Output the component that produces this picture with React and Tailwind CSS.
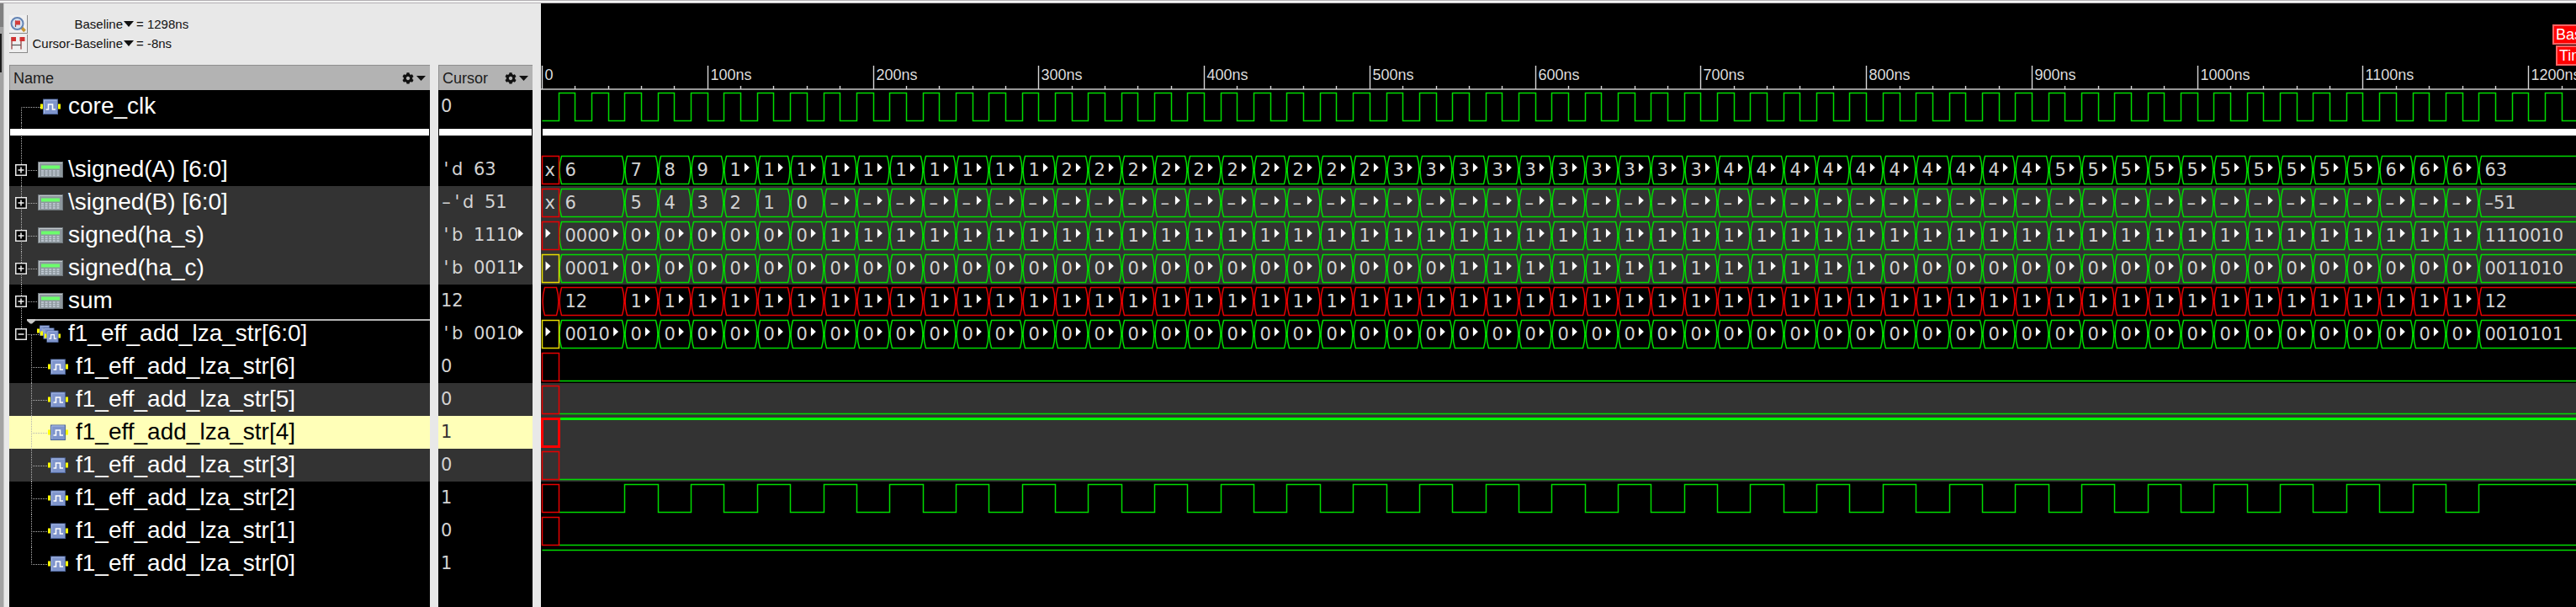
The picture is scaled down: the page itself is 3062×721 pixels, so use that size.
import React from "react";
import { FaCog } from "react-icons/fa";

const PX_PER_NS = 1.9677;
const END = 1700;
const LAST_LABEL = 1200;
const HIGH = 3.6;
const LOW = 36.6;
const GREEN = "#00dc00";
const RED = "#e60000";
const YELLOW = "#e6dc00";

const timeToX = (t) => Math.floor(1.5 + t * PX_PER_NS) + 0.5;

const bits = (n) => (n & 127).toString(2).padStart(7, "0");

// A counts up from 6 while B counts down, so that A + B stays at 12.
const samples = [
  { from: 10, to: 50, a: 6 },
  ...Array.from({ length: 56 }, (_, i) => ({
    from: 50 + i * 20,
    to: 70 + i * 20,
    a: 7 + i,
  })),
  { from: 1170, to: END, a: 63 },
];

const signals = [
  {
    kind: "bus", name: "\\signed(A) [6:0]", prefix: "'d ", cursor: "63",
    unknown: "x", unknownColor: RED, color: GREEN,
    value: ({ a }) => String(a),
  },
  {
    kind: "bus", name: "\\signed(B) [6:0]", prefix: "–'d ", cursor: "51", shaded: true,
    unknown: "x", unknownColor: RED, color: GREEN,
    value: ({ a }) => (a > 12 ? "–" + (a - 12) : String(a === 6 ? 6 : 12 - a)),
  },
  {
    kind: "bus", name: "signed(ha_s)", prefix: "'b ", cursor: "1110", cut: true, shaded: true,
    unknown: ">", unknownColor: RED, color: GREEN,
    value: ({ a }) => bits(a ^ (12 - a)),
  },
  {
    kind: "bus", name: "signed(ha_c)", prefix: "'b ", cursor: "0011", cut: true, shaded: true,
    unknown: ">", unknownColor: YELLOW, color: GREEN,
    value: ({ a }) => bits((a & (12 - a)) << 1),
  },
  {
    kind: "bus", name: "sum", prefix: "", cursor: "12",
    unknown: "", unknownColor: RED, color: RED,
    value: () => "12",
  },
  {
    kind: "group", name: "f1_eff_add_lza_str[6:0]", prefix: "'b ", cursor: "0010", cut: true,
    unknown: ">", unknownColor: YELLOW, color: GREEN,
    value: ({ from }) => (((from - 50) / 20) % 2 === 0 ? "0010101" : "0010001"),
  },
  { kind: "bit", name: "f1_eff_add_lza_str[6]", cursor: "0", level: 0, unknown: true },
  { kind: "bit", name: "f1_eff_add_lza_str[5]", cursor: "0", level: 0, unknown: true, shaded: true },
  { kind: "bit", name: "f1_eff_add_lza_str[4]", cursor: "1", level: 1, unknown: true, shaded: true, selected: true },
  { kind: "bit", name: "f1_eff_add_lza_str[3]", cursor: "0", level: 0, unknown: true, shaded: true },
  { kind: "bit", name: "f1_eff_add_lza_str[2]", cursor: "1", toggles: true, level: 0, unknown: true },
  { kind: "bit", name: "f1_eff_add_lza_str[1]", cursor: "0", level: 0, unknown: true },
  { kind: "bit", name: "f1_eff_add_lza_str[0]", cursor: "1", level: 1, last: true },
];

/* ---------- icons ---------- */

function PulseBox({ x, y, size }) {
  const s = size / 18;
  return (
    <g transform={`translate(${x} ${y}) scale(${s})`}>
      <rect x="0.5" y="0.5" width="17" height="17.5" fill="#7f95cc" stroke="#4c6499" />
      <path d="M1.5 17V1.5H16.5" fill="none" stroke="#a9bbe6" />
      <path d="M3.5 12.5H6.5V6.5H11.5V12.5H15" fill="none" stroke="#fff" strokeWidth="1.6" />
    </g>
  );
}

function SignalGlyph({ x }) {
  return (
    <g>
      <rect x={x} y="16.5" width="3.5" height="6" fill="#ffff00" />
      <rect x={x + 20.5} y="16.5" width="3.5" height="6" fill="#ffff00" />
      <PulseBox x={x + 3} y={10.5} size={18} />
    </g>
  );
}

function RegisterGlyph({ x }) {
  return (
    <g>
      <rect x={x + 0.5} y="10.5" width="29" height="18" fill="#8d979d" stroke="#6f777c" />
      <path d={`M${x + 1.5} 28V11.5H${x + 29}`} fill="none" stroke="#c3c9cc" />
      <rect x={x + 4} y="14.5" width="22" height="4" fill="#6cff6c" />
      {[21, 23.5, 26].map((y) => (
        <path key={y} d={`M${x + 4} ${y}H${x + 26}`} stroke="#c6d0da" strokeWidth="1.4" strokeDasharray="3 1.6" />
      ))}
    </g>
  );
}

function GroupGlyph() {
  return (
    <g>
      <rect x="33" y="13.5" width="3" height="5" fill="#ffff00" />
      <PulseBox x={36} y={9.5} size={12} />
      <rect x="37" y="16.5" width="3" height="5" fill="#ffff00" />
      <PulseBox x={40.5} y={12.5} size={13} />
      <rect x="42" y="19.5" width="3" height="5" fill="#ffff00" />
      <rect x="58" y="19.5" width="3" height="5" fill="#ffff00" />
      <PulseBox x={44.5} y={15.5} size={14} />
    </g>
  );
}

function Guides({ d }) {
  return <path d={d} fill="none" stroke="#b4b4b4" strokeDasharray="1 1" />;
}

function Expander({ open, name }) {
  return (
    <button
      type="button"
      aria-label={(open ? "Collapse " : "Expand ") + name}
      className="absolute left-[7px] top-[13px] block size-[14px] bg-black"
    >
      <svg viewBox="0 0 14 14" className="block size-full">
        <rect x="0.75" y="0.75" width="12.5" height="12.5" fill="none" stroke="#e6e6e6" strokeWidth="1.5" />
        <path d={open ? "M3.5 7H10.5" : "M3.5 7H10.5M7 3.5V10.5"} stroke="#f0f0f0" strokeWidth="1.5" />
      </svg>
    </button>
  );
}

function ColumnMenu({ label }) {
  return (
    <button type="button" aria-label={label} className="flex items-center gap-[3px] text-[#111]">
      <FaCog className="size-[14px]" />
      <svg viewBox="0 0 11 6" className="h-[6px] w-[11px]">
        <path d="M0 0H11L5.5 6Z" fill="currentColor" />
      </svg>
    </button>
  );
}

/* ---------- left side ---------- */

function NameCell({ signal }) {
  const { kind, name, last } = signal;
  const child = kind === "bit";
  return (
    <td className="relative p-0">
      <div className="flex h-[39px] items-center">
        <svg
          className={child ? "block h-[39px] w-[79px] shrink-0" : "block h-[39px] w-[70px] shrink-0"}
          aria-hidden="true"
        >
          {kind === "clock" && <Guides d="M14.5 39V20.5H38" />}
          {kind === "bus" && <Guides d="M14.5 0V39M22 20.5H33" />}
          {kind === "group" && <Guides d="M14.5 0V13M22 20.5H36M26.5 21V39" />}
          {child && <Guides d={last ? "M26.5 0V20.5H46" : "M26.5 0V39M28 20.5H46"} />}
          {kind === "clock" && <SignalGlyph x={37} />}
          {kind === "bus" && <RegisterGlyph x={34} />}
          {kind === "group" && <GroupGlyph />}
          {child && <SignalGlyph x={46} />}
        </svg>
        {(kind === "bus" || kind === "group") && <Expander open={kind === "group"} name={name} />}
        <span className="whitespace-nowrap pb-[2px] text-[28px] leading-[37px]">{name}</span>
      </div>
      {kind === "group" && (
        <div className="absolute left-[21px] right-0 top-[1px] flex items-start" aria-hidden="true">
          <svg viewBox="0 0 10 7" className="h-[7px] w-[10px] shrink-0">
            <path d="M0 1H10V3L6 6.5H4L0 3Z" fill="#c8c8c8" />
          </svg>
          <div className="mt-px h-[2px] flex-1 bg-[#b4b4b4]" />
        </div>
      )}
    </td>
  );
}

function CursorCell({ signal }) {
  const { prefix = "", cursor, cut, selected } = signal;
  return (
    <td className="border-l-10 border-[#e8e8e8] p-0">
      <div
        className={
          "flex h-[39px] items-center pl-[3px] font-['DejaVu_Sans',sans-serif] text-[21px] leading-[39px] " +
          (selected ? "text-[#333]" : "text-[#d2d2d2]")
        }
      >
        <span className="whitespace-pre">
          {prefix.split("").map((c, i) => (
            <span key={i} className="inline-block w-[13px] text-center">{c}</span>
          ))}
          {cursor}
        </span>
        {cut && (
          <svg viewBox="0 0 6 11" className="mb-[5px] h-[11px] w-[6px]" aria-hidden="true">
            <path d="M0 0L6 5.5L0 11Z" fill="#fff" />
          </svg>
        )}
      </div>
    </td>
  );
}

function SignalRow({ signal }) {
  const look = signal.selected
    ? "bg-[#ffffb8] text-black"
    : signal.shaded
      ? "bg-[#333] text-white"
      : "text-white";
  return (
    <tr className={look}>
      <NameCell signal={signal} />
      <CursorCell signal={signal} />
    </tr>
  );
}

function Readout({ icon, label, value }) {
  return (
    <div className="flex h-[23px] items-center text-[15px] leading-[23px] text-[#111]">
      <button
        type="button"
        aria-label={label + " marker"}
        className="mr-1 size-[22px] border-r border-b border-[#8a8a8a] bg-[#efefef]"
      >
        {icon}
      </button>
      <span className="w-[109px] text-right">{label}</span>
      <svg viewBox="0 0 12 7" className="mr-[3px] ml-px h-[7px] w-[12px]" aria-hidden="true">
        <path d="M0 0H12L6 7Z" fill="#111" />
      </svg>
      <span>= {value}</span>
    </div>
  );
}

const BaselineIcon = (
  <svg viewBox="0 0 21 21" className="block size-[21px]">
    <path d="M14.5 14.5L18.5 19" stroke="#c89632" strokeWidth="3.6" />
    <circle cx="9.5" cy="10" r="7" fill="#d7e4f2" stroke="#6484b4" strokeWidth="2" />
    <path d="M7.5 6.5V14" stroke="#8c3c3c" strokeWidth="1.2" />
    <rect x="7" y="6.5" width="6" height="5" fill="#d23c3c" />
  </svg>
);

const DeltaIcon = (
  <svg viewBox="0 0 21 21" className="block size-[21px]">
    <path d="M3 3V17.5M14 3V17.5" stroke="#a05050" strokeWidth="1.4" />
    <path d="M3 12.5H14" stroke="#555" strokeWidth="1.2" />
    <rect x="2.5" y="3" width="5.5" height="5" fill="#d23232" />
    <rect x="12.5" y="3" width="6" height="5" fill="#d23232" />
  </svg>
);

function SignalPanel() {
  return (
    <section className="flex w-[638px] shrink-0 flex-col bg-[#e8e8e8] pr-[10px] pl-[6px]">
      <div className="flex h-[73px] shrink-0 flex-col pt-[13px]">
        <Readout icon={BaselineIcon} label="Baseline" value="1298ns" />
        <Readout icon={DeltaIcon} label="Cursor-Baseline" value="-8ns" />
      </div>
      <div className="flex-1 bg-black">
        <table className="w-full table-fixed border-separate border-spacing-0 bg-black">
          <colgroup>
            <col />
            <col className="w-[122px]" />
          </colgroup>
          <thead>
            <tr className="text-left text-[18px] leading-[30px] text-[#1c1c1c]">
              <th scope="col" className="p-0 font-normal">
                <div className="flex h-[30px] items-center justify-between border-t border-l border-[#8f8f8f] bg-[#b3b3b3] pr-[5px] pl-[4px]">
                  <span>Name</span>
                  <ColumnMenu label="Name column options" />
                </div>
              </th>
              <th scope="col" className="border-l-10 border-[#e8e8e8] p-0 font-normal">
                <div className="flex h-[30px] items-center justify-between border-t border-l border-[#8f8f8f] bg-[#b3b3b3] pr-[5px] pl-[4px]">
                  <span>Cursor</span>
                  <ColumnMenu label="Cursor column options" />
                </div>
              </th>
            </tr>
          </thead>
          <tbody>
            <SignalRow signal={{ kind: "clock", name: "core_clk", cursor: "0" }} />
            <tr aria-hidden="true">
              <td className="relative h-[36px] p-0 align-top">
                <svg className="block h-[36px] w-[20px]">
                  <Guides d="M14.5 0V36" />
                </svg>
                <div className="absolute top-[7px] right-px left-px h-2 bg-white" />
              </td>
              <td className="h-[36px] border-l-10 border-[#e8e8e8] p-0 align-top">
                <div className="mx-px mt-[7px] h-2 bg-white" />
              </td>
            </tr>
            {signals.map((s) => (
              <SignalRow key={s.name} signal={s} />
            ))}
            <tr aria-hidden="true">
              <td className="h-[32px] p-0" />
              <td className="h-[32px] border-l-10 border-[#e8e8e8] p-0" />
            </tr>
          </tbody>
        </table>
      </div>
    </section>
  );
}

/* ---------- waveforms ---------- */

function Track({ shaded, label, children }) {
  return (
    <svg
      role="img"
      aria-label={label}
      className={shaded ? "block h-[39px] w-full shrink-0 bg-[#333]" : "block h-[39px] w-full shrink-0"}
    >
      {children}
    </svg>
  );
}

function hexPath(x1, x2) {
  const mid = (HIGH + LOW) / 2;
  return (
    `M${x1 + 3} ${HIGH}H${x2 - 3}L${x2 - 1.2} ${HIGH + 8}L${x2 - 0.6} ${mid}L${x2 - 1.2} ${LOW - 8}` +
    `L${x2 - 3} ${LOW}H${x1 + 3}L${x1 + 1.2} ${LOW - 8}L${x1 + 0.6} ${mid}L${x1 + 1.2} ${HIGH + 8}Z`
  );
}

const boxPath = (x1, x2) => `M${x1} ${HIGH}H${x2}V${LOW}H${x1}Z`;

const cutMark = (x) => `M${x} 11.5L${x + 6} 17L${x} 22.5Z`;

const textStyle =
  "fill-[#d2d2d2] font-['DejaVu_Sans',sans-serif] text-[21px] whitespace-pre";

function BusTrack({ signal }) {
  const { name, color, unknown, unknownColor, value, shaded } = signal;
  const start = timeToX(0);
  const first = timeToX(10);
  const cells = samples.map((s) => {
    const x1 = timeToX(s.from);
    const x2 = timeToX(s.to);
    const text = value(s);
    const room = Math.floor((x2 - x1 - 15) / 13.4);
    const cut = text.length > room;
    return { x1, x2, cut, shown: cut ? text.slice(0, room) : text };
  });
  return (
    <Track shaded={shaded} label={name}>
      <path d={cells.map((c) => hexPath(c.x1, c.x2)).join("")} fill="none" stroke={color} strokeWidth="1.5" />
      <path
        d={unknown ? boxPath(start, first) : hexPath(start, first)}
        fill="none"
        stroke={unknownColor}
        strokeWidth="1.5"
      />
      {unknown === "x" && <text x={start + 3} y="27" className={textStyle}>x</text>}
      {unknown === ">" && <path d={cutMark(start + 4)} fill="#fff" />}
      {cells.map((c) => (
        <text key={c.x1} x={c.x1 + 7} y="27" className={textStyle}>{c.shown}</text>
      ))}
      <path
        d={cells.filter((c) => c.cut).map((c) => cutMark(c.x1 + 11 + c.shown.length * 13.4)).join("")}
        fill="#fff"
      />
    </Track>
  );
}

function stepPath(from, initial, edges) {
  let level = initial;
  let d = `M${timeToX(from)} ${level ? HIGH : LOW}`;
  edges.forEach((t) => {
    level = !level;
    d += `H${timeToX(t)}V${level ? HIGH : LOW}`;
  });
  return d + `H${timeToX(END)}`;
}

function BitTrack({ signal }) {
  const { name, level, unknown, toggles, selected, shaded } = signal;
  const edges = toggles ? samples.slice(1).map((s) => s.from) : [];
  const weight = selected ? 3 : 1.5;
  return (
    <Track shaded={shaded} label={name}>
      <path
        d={stepPath(unknown ? 10 : 0, level === 1, edges)}
        fill="none"
        stroke={selected ? "#00ff00" : GREEN}
        strokeWidth={weight}
      />
      {unknown && (
        <path
          d={boxPath(timeToX(0), timeToX(10))}
          fill="none"
          stroke={selected ? "#ff0000" : RED}
          strokeWidth={weight}
        />
      )}
    </Track>
  );
}

function Ruler() {
  const ticks = Array.from({ length: END / 20 }, (_, i) => i * 20);
  const major = ticks.filter((t) => t % 100 === 0 && t <= LAST_LABEL);
  return (
    <svg className="block h-[32px] w-full" role="img" aria-label="Time ruler">
      <path d={`M0 31H${timeToX(END)}`} stroke="#c8c8c8" strokeWidth="1.5" />
      <path
        d={ticks.map((t) => `M${timeToX(t)} ${t % 100 === 0 ? 3 : 27}V31`).join("")}
        stroke="#d7d7d7"
        strokeWidth="1.4"
      />
      {major.map((t) => (
        <text
          key={t}
          x={timeToX(t) + 3}
          y="20"
          className="fill-[#dcdcdc] font-['Liberation_Sans',Arial,sans-serif] text-[18px]"
        >
          {t === 0 ? "0" : t + "ns"}
        </text>
      ))}
    </svg>
  );
}

function Flag({ time, className, children }) {
  return (
    <div
      className={
        "absolute h-[24px] -translate-x-full border-2 border-[#ff6464] bg-[#ff0000] pl-[2px] text-[18px] leading-[20px] whitespace-nowrap text-white " +
        className
      }
      style={{ left: timeToX(time) + 0.5 }}
    >
      {children}
    </div>
  );
}

function WavePanel() {
  const clockEdges = Array.from({ length: END / 10 - 1 }, (_, i) => (i + 1) * 10);
  return (
    <section className="relative flex min-w-0 flex-1 flex-col overflow-hidden bg-black">
      <div className="flex h-[103px] shrink-0 flex-col justify-end">
        <Ruler />
      </div>
      <Flag time={1298} className="top-[25px] w-[165px]">Baseline = 1298ns</Flag>
      <Flag time={1290} className="top-[50px] w-[145px]">TimeA = 1290ns</Flag>
      <Track label="core_clk">
        <path d={stepPath(0, false, clockEdges)} fill="none" stroke={GREEN} strokeWidth="1.5" />
      </Track>
      <div className="h-[36px] shrink-0 pt-[7px] pl-[2px]">
        <div className="h-2 bg-white" />
      </div>
      {signals.map((s) =>
        s.kind === "bit" ? <BitTrack key={s.name} signal={s} /> : <BusTrack key={s.name} signal={s} />
      )}
    </section>
  );
}

export default function App() {
  return (
    <main className="flex min-h-screen flex-col overflow-hidden bg-black font-['Liberation_Sans',Arial,sans-serif]">
      <div className="h-[4px] shrink-0 border-t border-b border-[#b4b0b4] bg-[#f4f4f4]" />
      <div className="flex flex-1">
        <div className="flex w-[5px] shrink-0 flex-col border-r border-[#c8c8c8] bg-[#a3a3a3]">
          <div className="h-[28px] bg-[#808080]" />
          <div className="mt-[8px] h-[46px] w-[2px] bg-[#1c1c1c]" />
        </div>
        <SignalPanel />
        <WavePanel />
      </div>
    </main>
  );
}
